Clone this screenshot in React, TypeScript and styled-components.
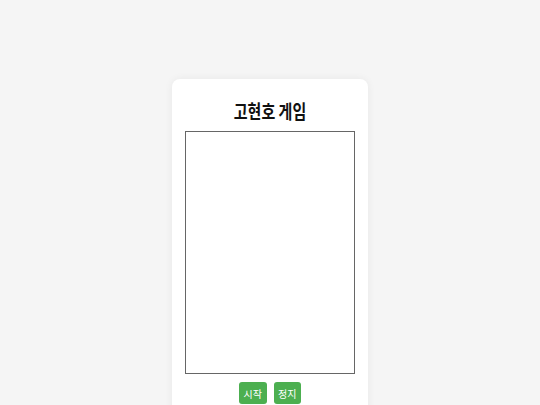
import React from "react";
import styled, { createGlobalStyle } from "styled-components";

const GlobalStyle = createGlobalStyle`
  html, body {
    margin: 0;
    padding: 0;
    background: #f5f5f5;
    font-family: "Noto Sans CJK KR", "Noto Sans", sans-serif;
  }
`;

const Page = styled.div`
  display: flex;
  justify-content: center;
  padding-top: 79px;
`;

const Card = styled.div`
  background: #ffffff;
  border-radius: 8px;
  box-shadow: 0 0 8px rgba(0, 0, 0, 0.06);
  padding: 13px 13px 20px;
  display: flex;
  flex-direction: column;
  align-items: center;
`;

const Title = styled.h1`
  margin: 6px 0 7px;
  font-size: 15px;
  font-weight: 700;
  line-height: 26px;
  color: #111;
  transform: scaleY(1.3);
`;

const Board = styled.canvas`
  display: block;
  width: 168px;
  height: 241px;
  border: 1px solid #666;
  background: #fff;
`;

const Controls = styled.div`
  display: flex;
  gap: 7px;
  margin-top: 8px;
`;

const Button = styled.button`
  background: #4caf50;
  color: #fff;
  border: none;
  border-radius: 3px;
  padding: 0 4.5px;
  height: 22px;
  font-family: "Noto Sans CJK KR", sans-serif;
  font-size: 10px;
  cursor: pointer;
`;

const App: React.FC = () => {
  return (
    <>
      <GlobalStyle />
      <Page>
        <Card>
          <Title>고현호 게임</Title>
          <Board width={168} height={241} />
          <Controls>
            <Button>시작</Button>
            <Button>정지</Button>
          </Controls>
        </Card>
      </Page>
    </>
  );
};

export default App;
